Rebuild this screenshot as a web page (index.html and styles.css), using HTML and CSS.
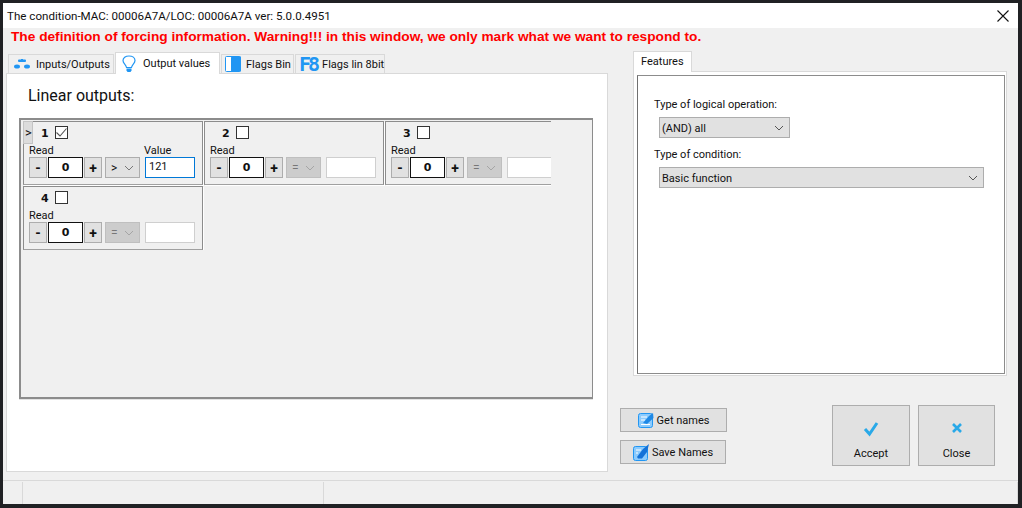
FILE: index.html
```html
<!DOCTYPE html>
<html>
<head>
    <title>The condition</title>
    <link rel="stylesheet" href="styles.css">
</head>
<body>
    <div class="window">
        <div class="titlebar">
            <span class="title">The condition-MAC: 00006A7A/LOC: 00006A7A ver: 5.0.0.4951</span>
            <svg class="close-x" width="12" height="12" viewBox="0 0 12 12"><path d="M0.5 0.5L11.5 11.5M11.5 0.5L0.5 11.5" stroke="#111" stroke-width="1.1" fill="none"/></svg>
        </div>
        <div class="warning">The definition of forcing information. Warning!!! in this window, we only mark what we want to respond to.</div>

        <div class="main">
            <div class="left">
                <div class="tabs">
                    <div class="tab tab-first">
                        <svg width="16" height="10" viewBox="0 0 16 10"><rect x="4" y="0.500" width="8" height="2.500" rx="1" fill="#2196f3"/><rect x="7" y="0" width="2" height="1" fill="#2196f3"/><ellipse cx="3" cy="7.500" rx="3" ry="2" fill="#2196f3"/><ellipse cx="13" cy="7.500" rx="3" ry="2" fill="#2196f3"/></svg>
                        <span>Inputs/Outputs</span>
                    </div>
                    <div class="tab tab-active">
                        <svg width="14" height="18" viewBox="0 0 14 18"><path d="M4.500 12.500C4 9.500 1 8.500 1 5.500C1 3 3.500 1 7 1C10.500 1 13 3 13 5.500C13 8.500 10 9.500 9.500 12.500Z" stroke="#2196f3" stroke-width="1.200" fill="#fff"/><path d="M4.500 13.500H9.500V15.500L8.500 17H5.500L4.500 15.500Z" fill="#2196f3"/></svg>
                        <span>Output values</span>
                    </div>
                    <div class="tab tab-bin">
                        <svg width="16" height="16" viewBox="0 0 16 16"><rect x="0.500" y="0.500" width="15" height="15" rx="1" fill="#fff" stroke="#2196f3"/><rect x="6" y="0.500" width="10" height="15" rx="1" fill="#2196f3"/></svg>
                        <span>Flags Bin</span>
                    </div>
                    <div class="tab tab-lin">
                        <span class="f8">F8</span>
                        <span>Flags lin 8bit</span>
                    </div>
                </div>
                <div class="tab-panel">
                    <div class="panel-title">Linear outputs:</div>
                    <div class="outputs-box">
                        <div class="outputs-grid">
                            <div class="card">
                                <div class="card-arrow">&gt;</div>
                                <div class="card-head">
                                    <b class="card-num">1</b>
                                    <span class="check"><svg width="11" height="9" viewBox="0 0 11 9"><path d="M0.500 4.500L4 8L10.500 0.500" stroke="#555" stroke-width="1.100" fill="none"/></svg></span>
                                </div>
                                <div class="labels"><span class="lbl-read">Read</span><span>Value</span></div>
                                <div class="controls">
                                    <button class="step">-</button>
                                    <div class="count">0</div>
                                    <button class="step">+</button>
                                    <div class="op">&gt;<svg class="chev" width="10" height="6" viewBox="0 0 10 6"><path d="M1 1L5 5L9 1" stroke="#777" fill="none"/></svg></div>
                                    <div class="value value-focus">121</div>
                                </div>
                            </div>
                            <div class="card">
                                <div class="card-head">
                                    <b class="card-num">2</b>
                                    <span class="check"></span>
                                </div>
                                <div class="labels"><span class="lbl-read">Read</span></div>
                                <div class="controls">
                                    <button class="step">-</button>
                                    <div class="count">0</div>
                                    <button class="step">+</button>
                                    <div class="op op-off">=<svg class="chev" width="10" height="6" viewBox="0 0 10 6"><path d="M1 1L5 5L9 1" stroke="#a5a5a5" fill="none"/></svg></div>
                                    <div class="value"></div>
                                </div>
                            </div>
                            <div class="card">
                                <div class="card-head">
                                    <b class="card-num">3</b>
                                    <span class="check"></span>
                                </div>
                                <div class="labels"><span class="lbl-read">Read</span></div>
                                <div class="controls">
                                    <button class="step">-</button>
                                    <div class="count">0</div>
                                    <button class="step">+</button>
                                    <div class="op op-off">=<svg class="chev" width="10" height="6" viewBox="0 0 10 6"><path d="M1 1L5 5L9 1" stroke="#a5a5a5" fill="none"/></svg></div>
                                    <div class="value"></div>
                                </div>
                            </div>
                            <div class="card">
                                <div class="card-head">
                                    <b class="card-num">4</b>
                                    <span class="check"></span>
                                </div>
                                <div class="labels"><span class="lbl-read">Read</span></div>
                                <div class="controls">
                                    <button class="step">-</button>
                                    <div class="count">0</div>
                                    <button class="step">+</button>
                                    <div class="op op-off">=<svg class="chev" width="10" height="6" viewBox="0 0 10 6"><path d="M1 1L5 5L9 1" stroke="#a5a5a5" fill="none"/></svg></div>
                                    <div class="value"></div>
                                </div>
                            </div>
                        </div>
                    </div>
                </div>
            </div>

            <div class="right">
                <div class="features-tab">Features</div>
                <div class="features-panel">
                    <div class="features-inner">
                        <label class="field-label">Type of logical operation:</label>
                        <div class="select select-short">(AND) all<svg width="10" height="6" viewBox="0 0 10 6"><path d="M1 1L5 5L9 1" stroke="#555" fill="none"/></svg></div>
                        <label class="field-label">Type of condition:</label>
                        <div class="select select-long">Basic function<svg width="10" height="6" viewBox="0 0 10 6"><path d="M1 1L5 5L9 1" stroke="#555" fill="none"/></svg></div>
                    </div>
                </div>
                <div class="actions">
                    <div class="name-buttons">
                        <button class="name-btn name-get">
                            <svg width="16" height="16" viewBox="0 0 16 16"><rect x="0.500" y="1.500" width="14" height="14" rx="2" fill="#8ccbfd" stroke="#2196f3"/><path d="M3 5H9M3 8H7M3 12.500H12" stroke="#fff"/><path d="M5 11L11 4L15 1L15.500 6L9 12Z" fill="#1e88e5"/></svg>
                            <span>Get names</span>
                        </button>
                        <button class="name-btn name-save">
                            <svg width="16" height="17" viewBox="0 0 16 17"><rect x="0.500" y="2.500" width="14" height="14" rx="2" fill="#8ccbfd" stroke="#2196f3"/><path d="M3 6H8M3 9H5" stroke="#fff"/><path d="M4 13L10 5L16 0L14 8L9 14.500H5Z" fill="#1472d8"/></svg>
                            <span>Save Names</span>
                        </button>
                    </div>
                    <button class="big-btn big-accept">
                        <svg width="16" height="16" viewBox="0 0 16 16"><path d="M2 8L6.500 13L14 2" stroke="#29a9e8" stroke-width="3" fill="none"/></svg>
                        <span>Accept</span>
                    </button>
                    <button class="big-btn big-close">
                        <svg width="10" height="10" viewBox="0 0 10 10"><path d="M1 1L9 9M9 1L1 9" stroke="#29a9e8" stroke-width="2.600" fill="none"/></svg>
                        <span>Close</span>
                    </button>
                </div>
            </div>
        </div>

        <div class="statusbar">
            <div class="status-cell status-a"></div>
            <div class="status-cell status-b"></div>
            <div class="status-cell"></div>
        </div>
    </div>
</body>
</html>
```

FILE: styles.css
```css
html, body {
    margin: 0;
    height: 100%;
}
body {
    background-color: #202124;
    font-family: Roboto, Arial, sans-serif;
    font-size: 11px;
    color: #111;
    overflow: hidden;
}
svg {
    flex: none;
}
.window {
    box-sizing: border-box;
    width: 1015px;
    height: 501px;
    margin: 3px 0 0 3px;
    background-color: #f0f0f0;
    display: flex;
    flex-direction: column;
}
.titlebar {
    height: 25px;
    flex: none;
    background: white;
    display: flex;
    align-items: center;
    justify-content: space-between;
    padding: 0 9px 0 4px;
}
.title {
    font-size: 11.6px;
}
.warning {
    height: 18px;
    line-height: 17px;
    padding-left: 8px;
    font-family: "Liberation Sans", Arial, sans-serif;
    font-weight: bold;
    font-size: 13.7px;
    color: #ff0000;
    white-space: nowrap;
}
.main {
    flex: 1;
    display: flex;
    padding-left: 3px;
    min-height: 0;
}
.left {
    width: 602px;
    margin-top: 5px;
}
.tabs {
    display: flex;
    align-items: flex-end;
    height: 22px;
    padding-left: 2px;
}
.tab {
    box-sizing: border-box;
    height: 19px;
    margin-right: 1px;
    display: flex;
    align-items: center;
    background: #f0f0f0;
    border: 1px solid #d9d9d9;
    border-bottom: none;
    white-space: nowrap;
}
.tab-first {
    width: 106px;
    padding-left: 5px;
    gap: 6px;
}
.tab-active {
    width: 105px;
    height: 22px;
    padding-left: 6px;
    gap: 7px;
    background: white;
    margin-bottom: -1px;
    position: relative;
}
.tab-bin {
    width: 73px;
    padding-left: 3px;
    gap: 5px;
}
.tab-lin {
    width: 90px;
    padding-left: 3px;
    gap: 5px;
}
.f8 {
    font-family: "DejaVu Sans Mono", monospace;
    font-weight: bold;
    font-size: 20px;
    line-height: 17px;
    letter-spacing: -3px;
    color: #2196f3;
}
.tab-panel {
    box-sizing: border-box;
    height: 399px;
    background: white;
    border: 1px solid #d9d9d9;
    padding: 0 14px 0 12px;
}
.panel-title {
    font-size: 16px;
    line-height: 22px;
    padding: 11px 0 0 9px;
    height: 22px;
}
.outputs-box {
    box-sizing: border-box;
    width: 574px;
    height: 281px;
    margin-top: 11px;
    background: #f0f0f0;
    border: 2px solid #8c8c8c;
    border-right-width: 1px;
    padding: 1px 0 0 2px;
    box-shadow: 0 1px 0 #e3e3e3;
}
.outputs-grid {
    width: 528px;
    overflow: hidden;
    display: grid;
    grid-template-columns: repeat(3, 180px);
    grid-auto-rows: 64px;
    gap: 1px;
}
.card {
    box-sizing: border-box;
    position: relative;
    border: 1px solid #8c8c8c;
    border-bottom-color: #a0a0a0;
    padding: 0 0 0 5px;
    box-shadow: 1px 1px 0 #fff;
}
.card-arrow {
    position: absolute;
    left: -1px;
    top: -1px;
    width: 10px;
    height: 23px;
    box-sizing: border-box;
    background: #dcdcdc;
    border: 1px solid #c4c4c4;
    font-size: 13px;
    line-height: 21px;
    padding-left: 1px;
    overflow: hidden;
}
.card-head {
    box-sizing: border-box;
    display: flex;
    align-items: flex-start;
    gap: 7px;
    height: 20px;
    padding: 4px 0 0 12px;
}
.card-num {
    font-family: "DejaVu Sans", sans-serif;
    font-size: 11px;
    line-height: 16px;
    width: 7px;
}
.check {
    box-sizing: border-box;
    width: 13px;
    height: 13px;
    background: white;
    border: 1px solid #333;
    display: flex;
    align-items: center;
    justify-content: center;
}
.labels {
    display: flex;
    height: 15px;
    line-height: 18px;
}
.lbl-read {
    width: 115px;
}
.controls {
    display: flex;
    align-items: stretch;
    height: 21px;
}
.step {
    box-sizing: border-box;
    width: 18px;
    padding: 0;
    margin: 0;
    background: #e1e1e1;
    border: 1px solid #adadad;
    font-family: Roboto, Arial, sans-serif;
    font-weight: bold;
    font-size: 14px;
    color: #111;
}
.count {
    box-sizing: border-box;
    width: 35px;
    margin: 0 1px;
    background: white;
    border: 1px solid #111;
    font-family: "DejaVu Sans", sans-serif;
    font-weight: bold;
    font-size: 11px;
    text-align: center;
    line-height: 19px;
}
.op {
    box-sizing: border-box;
    width: 35px;
    margin: 0 5px 0 3px;
    padding: 0 5px;
    font-size: 12px;
    background: #e1e1e1;
    border: 1px solid #adadad;
    display: flex;
    align-items: center;
    justify-content: space-between;
}
.op-off {
    background: #cccccc;
    border-color: #bfbfbf;
    color: #777;
}
.value {
    box-sizing: border-box;
    width: 50px;
    padding-left: 3px;
    background: white;
    border: 1px solid #cfcfcf;
    line-height: 18px;
}
.value-focus {
    border-color: #0078d7;
}
.right {
    width: 374px;
    margin-left: 25px;
    margin-top: 5px;
}
.features-tab {
    box-sizing: border-box;
    width: 59px;
    height: 21px;
    padding-left: 7px;
    line-height: 19px;
    background: white;
    border: 1px solid #d9d9d9;
    border-bottom: none;
    margin-bottom: -1px;
    position: relative;
}
.features-panel {
    box-sizing: border-box;
    height: 305px;
    border: 1px solid #d9d9d9;
    background: white;
    padding: 3px 1px 0 3px;
}
.features-inner {
    box-sizing: border-box;
    height: 299px;
    border: 1px solid #8c8c8c;
    border-left-color: #707070;
    padding: 21px 0 0 16px;
    display: flex;
    flex-direction: column;
    align-items: flex-start;
}
.field-label {
    line-height: 16px;
    height: 16px;
    margin-bottom: 4px;
}
.select {
    box-sizing: border-box;
    height: 21px;
    margin: 0 0 9px 5px;
    padding: 1px 5px 0 2px;
    background: #e1e1e1;
    border: 1px solid #adadad;
    display: flex;
    align-items: center;
    justify-content: space-between;
}
.select-short {
    width: 131px;
}
.select-long {
    width: 325px;
}
.actions {
    display: flex;
    align-items: flex-start;
    margin-top: 29px;
    margin-left: -13px;
}
.name-buttons {
    width: 212px;
    padding-top: 3px;
    display: flex;
    flex-direction: column;
    align-items: flex-start;
    gap: 8px;
}
.name-btn {
    box-sizing: border-box;
    height: 24px;
    padding: 0;
    background: #e1e1e1;
    border: 1px solid #adadad;
    font-family: inherit;
    font-size: 11px;
    color: #111;
    display: flex;
    align-items: center;
    justify-content: center;
    gap: 3px;
}
.name-get {
    width: 107px;
}
.name-save {
    width: 106px;
}
.big-btn {
    box-sizing: border-box;
    height: 61px;
    padding: 0 0 3px;
    background: #e1e1e1;
    border: 1px solid #adadad;
    font-family: inherit;
    font-size: 11px;
    color: #111;
    display: flex;
    flex-direction: column;
    align-items: center;
    justify-content: flex-end;
}
.big-btn span {
    line-height: 16px;
}
.big-accept {
    width: 78px;
    margin-right: 8px;
}
.big-accept svg {
    margin-bottom: 9px;
}
.big-close {
    width: 77px;
}
.big-close svg {
    margin-bottom: 13px;
}
.statusbar {
    flex: none;
    height: 24px;
    border-top: 1px solid #d9d9d9;
    display: flex;
    padding-top: 1px;
    box-sizing: border-box;
}
.status-cell {
    border-left: 1px solid #d9d9d9;
}
.status-a {
    margin-left: 19px;
    width: 300px;
}
.status-b {
    width: 0;
    flex: 1;
}
```
